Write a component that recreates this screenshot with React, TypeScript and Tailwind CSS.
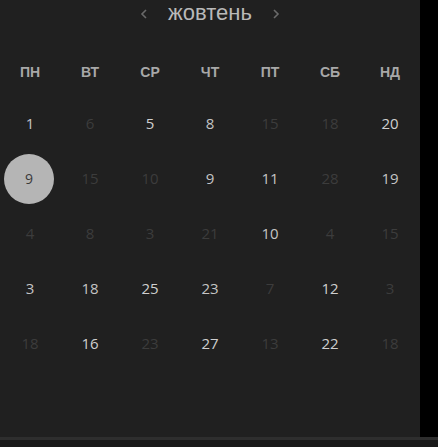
const days = ["ПН", "ВТ", "СР", "ЧТ", "ПТ", "СБ", "НД"];

// [value, tone] tone: b = bright, s = medium bright, d = dim, x = selected
const rows: [string, string][][] = [
  [["1", "b"], ["6", "d"], ["5", "s"], ["8", "b"], ["15", "d"], ["18", "d"], ["20", "s"]],
  [["9", "x"], ["15", "d"], ["10", "d"], ["9", "b"], ["11", "b"], ["28", "d"], ["19", "b"]],
  [["4", "d"], ["8", "d"], ["3", "d"], ["21", "d"], ["10", "b"], ["4", "d"], ["15", "d"]],
  [["3", "b"], ["18", "b"], ["25", "s"], ["23", "b"], ["7", "d"], ["12", "s"], ["3", "d"]],
  [["18", "d"], ["16", "s"], ["23", "d"], ["27", "s"], ["13", "d"], ["22", "s"], ["18", "d"]],
];

export default function App() {
  return (
    <div className="w-[438px] h-[447px] bg-black overflow-hidden flex flex-col">
      <div className="w-[420px] h-[437px] bg-[#202020] flex flex-col">
        <div className="h-[30px] flex items-center justify-center gap-[16px]">
          <svg width="8" height="10" viewBox="0 0 8 10" className="mt-[-2px]">
            <path d="M6 1 L2 5 L6 9" stroke="#6a6a6a" strokeWidth="1.6" fill="none" />
          </svg>
          <span
            className="text-[22px] text-[#b9b9b9] leading-none mb-[4px] px-[4px]"
            style={{ fontFamily: '"Liberation Sans", Arial, sans-serif' }}
          >
            жовтень
          </span>
          <svg width="8" height="10" viewBox="0 0 8 10" className="mt-[-2px]">
            <path d="M2 1 L6 5 L2 9" stroke="#6a6a6a" strokeWidth="1.6" fill="none" />
          </svg>
        </div>

        <div
          className="mt-[28px] h-[28px] grid grid-cols-7 items-center"
          style={{ fontFamily: '"Liberation Sans", Arial, sans-serif' }}
        >
          {days.map((d) => (
            <div key={d} className="text-center text-[14px] font-bold text-[#a8a8a8]">
              {d}
            </div>
          ))}
        </div>

        <div
          className="mt-[10px] flex flex-col"
          style={{ fontFamily: '"Open Sans", "Noto Sans", sans-serif' }}
        >
          {rows.map((row, r) => (
            <div key={r} className="h-[55px] grid grid-cols-7 items-center">
              {row.map(([v, t], c) => (
                <div key={c} className="flex justify-center items-center">
                  {t === "x" ? (
                    <div className="w-[50px] h-[50px] rounded-full bg-[#b5b5b5] flex items-center justify-center text-[14px] font-medium text-[#3a3a3a] mr-[2px]">
                      {v}
                    </div>
                  ) : (
                    <span
                      className={
                        t === "d"
                          ? "text-[15px] text-[#3c3c3c]"
                          : t === "s"
                          ? "text-[15px] font-medium text-[#cfcfcf]"
                          : "text-[15px] text-[#c4c4c4]"
                      }
                    >
                      {v}
                    </span>
                  )}
                </div>
              ))}
            </div>
          ))}
        </div>
      </div>
      <div className="h-[3px] bg-[#2e2e2e]" />
      <div className="flex-1 bg-[#191919]" />
    </div>
  );
}
